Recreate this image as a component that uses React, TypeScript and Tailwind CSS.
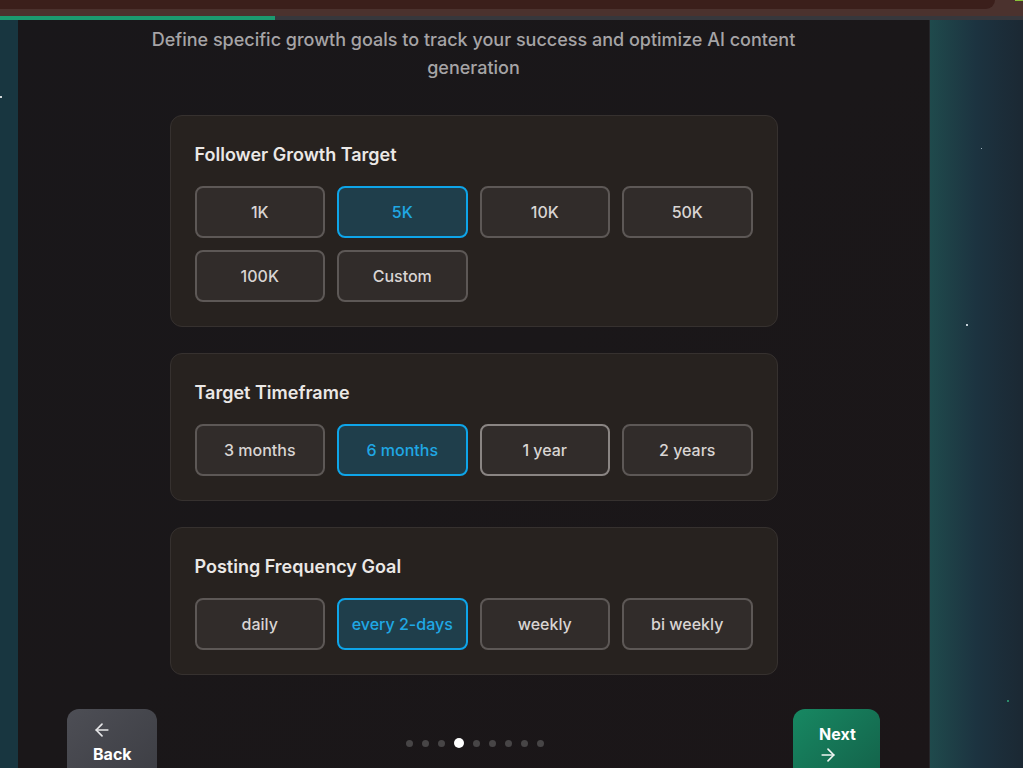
import React, { useState } from "react";
import { ArrowLeft, ArrowRight } from "lucide-react";

type Group = {
  title: string;
  options: string[];
  selected: string;
};

const groups: Group[] = [
  {
    title: "Follower Growth Target",
    options: ["1K", "5K", "10K", "50K", "100K", "Custom"],
    selected: "5K",
  },
  {
    title: "Target Timeframe",
    options: ["3 months", "6 months", "1 year", "2 years"],
    selected: "6 months",
  },
  {
    title: "Posting Frequency Goal",
    options: ["daily", "every 2-days", "weekly", "bi weekly"],
    selected: "every 2-days",
  },
];

function OptionCard({ group }: { group: Group }) {
  const [value, setValue] = useState(group.selected);

  return (
    <div className="rounded-xl border border-[#36312f] bg-[#27221f] p-6">
      <h3 className="mb-[17px] mt-px text-[18px] leading-7 font-semibold text-[#ebe8e6]">
        {group.title}
      </h3>
      <div className="grid grid-cols-4 gap-3">
        {group.options.map((opt) => {
          const active = opt === value;
          const hovered = opt === "1 year";
          return (
            <button
              key={opt}
              type="button"
              onClick={() => setValue(opt)}
              className={
                active
                  ? "h-[52px] rounded-lg border-2 border-[#0ea5e9] bg-[#1f3e4b] text-[16px] font-medium text-[#1fa8e4]"
                  : hovered
                    ? "h-[52px] rounded-lg border-2 border-[#8a8583] bg-[#312c2a] text-[16px] font-medium text-[#d9d5d3]"
                    : "h-[52px] rounded-lg border-2 border-[#5d5856] bg-[#312c2a] text-[16px] font-medium text-[#d9d5d3]"
              }
            >
              {opt}
            </button>
          );
        })}
      </div>
    </div>
  );
}

export default function App() {
  const step = 3;
  const total = 9;

  return (
    <div
      className="flex h-screen flex-col overflow-hidden bg-[#1a1719]"
      style={{ fontFamily: "Inter, 'Noto Sans', sans-serif" }}
    >
      {/* top chrome strip */}
      <div className="relative h-4 shrink-0 bg-[#4b322e]">
        <div className="h-[9px] w-[995px] rounded-br-[10px] bg-[#3b1f1b]" />
        <div className="absolute right-0 top-0 h-px w-2 bg-[#8ac43a]" />
      </div>

      {/* progress */}
      <div className="flex h-1 shrink-0 bg-[#36373c]">
        <div className="h-full w-[275px] bg-[#1b9a70]" />
      </div>

      <div className="flex min-h-0 flex-1">
        <div className="relative w-[18px] shrink-0 bg-[#183640]">
          <div className="absolute left-0 top-[76px] h-[2px] w-[2px] bg-white/80" />
        </div>

        <main className="flex min-w-0 flex-1 flex-col border-r border-[#26262a] bg-gradient-to-br from-[#19171a] via-[#1a1719] to-[#1b1618]">
          <p className="mx-auto mt-[6px] max-w-[672px] text-center text-[18px] leading-7 font-medium text-[#a6a4a6]">
            Define specific growth goals to track your success and optimize AI
            content generation
          </p>

          <div className="mx-auto mt-[33px] flex w-[608px] flex-col gap-[26px]">
            {groups.map((g) => (
              <OptionCard key={g.title} group={g} />
            ))}
          </div>

          <div className="mt-[34px] flex items-start justify-between pl-[49px] pr-[49px]">
            <button
              type="button"
              className="flex h-[80px] w-[90px] flex-col items-start rounded-xl bg-gradient-to-br from-[#4d4e55] to-[#3c3d43] pl-[26px] pt-[11px] text-white"
            >
              <ArrowLeft size={20} strokeWidth={2} className="-ml-px text-[#e6e6e8]" />
              <span className="mt-[2px] text-[16px] leading-6 font-bold">Back</span>
            </button>

            <div className="mt-[29px] flex items-center gap-[9px]">
              {Array.from({ length: total }).map((_, i) =>
                i === step ? (
                  <span key={i} className="h-[10px] w-[10px] rounded-full bg-white" />
                ) : (
                  <span key={i} className="h-[7px] w-[7px] rounded-full bg-[#474546]" />
                ),
              )}
            </div>

            <button
              type="button"
              className="flex h-[80px] w-[87px] flex-col items-start rounded-xl bg-gradient-to-br from-[#178862] to-[#135f48] pl-[26px] pt-[13px] text-white"
            >
              <span className="text-[16px] leading-6 font-bold">Next</span>
              <ArrowRight size={20} strokeWidth={2} className="-ml-px -mt-px text-[#eef5f2]" />
            </button>
          </div>
        </main>

        <div className="relative w-[93px] shrink-0 bg-gradient-to-r from-[#1f4a4c] via-[#1c3340] to-[#1b2833]">
          <div className="absolute left-[51px] top-[128px] h-px w-px bg-[#9fb2bd]" />
          <div className="absolute left-[36px] top-[304px] h-[2px] w-[2px] bg-[#c4d0d6]" />
          <div className="absolute left-[77px] top-[680px] h-[2px] w-[2px] bg-[#2c8a6a]" />
        </div>
      </div>
    </div>
  );
}
